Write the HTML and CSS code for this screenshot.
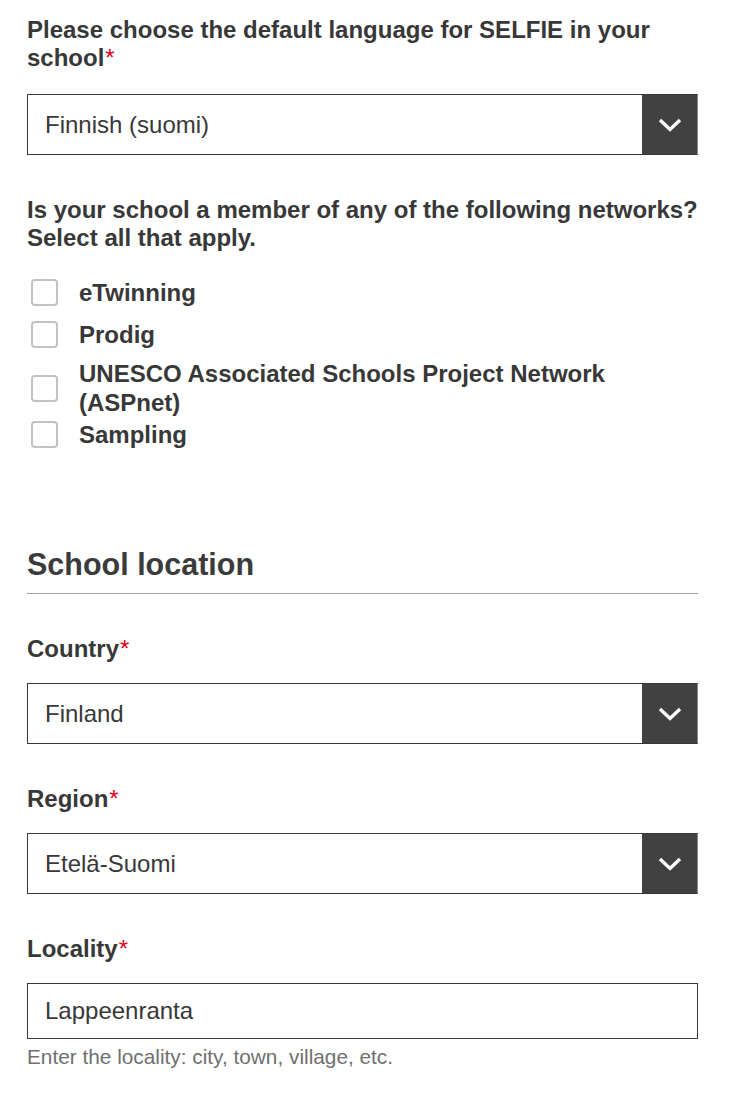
FILE: index.html
```html
<!DOCTYPE html>
<html lang="en">
<head>
<meta charset="utf-8">
<title>SELFIE school settings</title>
<link rel="stylesheet" href="styles.css">
</head>
<body>
<main class="page">
  <section class="field field--first">
    <h2 class="q-title">Please choose the default language for SELFIE in your school<span class="req">*</span></h2>
    <div class="select select--first">
      <span class="select-value">Finnish (suomi)</span>
      <span class="select-btn"><svg class="chev" viewBox="0 0 24 14" width="24" height="14"><path d="M2 2 L12 11.5 L22 2" fill="none" stroke="#fff" stroke-width="3.4"/></svg></span>
    </div>
  </section>

  <section class="field field--networks">
    <h2 class="q-title">Is your school a member of any of the following networks? Select all that apply.</h2>
    <ul class="checklist">
      <li class="check-item"><span class="checkbox"></span><span class="check-label">eTwinning</span></li>
      <li class="check-item"><span class="checkbox"></span><span class="check-label">Prodig</span></li>
      <li class="check-item check-item--wrap"><span class="checkbox"></span><span class="check-label">UNESCO Associated Schools Project Network (ASPnet)</span></li>
      <li class="check-item"><span class="checkbox"></span><span class="check-label">Sampling</span></li>
    </ul>
  </section>

  <h2 class="section-title">School location</h2>

  <section class="field">
    <label class="field-label">Country<span class="req">*</span></label>
    <div class="select">
      <span class="select-value">Finland</span>
      <span class="select-btn"><svg class="chev" viewBox="0 0 24 14" width="24" height="14"><path d="M2 2 L12 11.5 L22 2" fill="none" stroke="#fff" stroke-width="3.4"/></svg></span>
    </div>
  </section>

  <section class="field">
    <label class="field-label">Region<span class="req">*</span></label>
    <div class="select">
      <span class="select-value">Etelä-Suomi</span>
      <span class="select-btn"><svg class="chev" viewBox="0 0 24 14" width="24" height="14"><path d="M2 2 L12 11.5 L22 2" fill="none" stroke="#fff" stroke-width="3.4"/></svg></span>
    </div>
  </section>

  <section class="field">
    <label class="field-label">Locality<span class="req">*</span></label>
    <div class="text-input">Lappeenranta</div>
    <p class="help">Enter the locality: city, town, village, etc.</p>
  </section>
</main>
</body>
</html>
```

FILE: styles.css
```css
html, body {
  margin: 0;
  padding: 0;
  background: #fff;
}

body {
  font-family: "Liberation Sans", Arial, sans-serif;
  color: #383838;
}

.page {
  width: 671px;
  padding: 16px 0 0 27px;
}

.field {
  margin: 41px 0 0;
}

.field--first {
  margin-top: 0;
}

.q-title {
  margin: 0;
  font-size: 24px;
  line-height: 28px;
  font-weight: bold;
}

.req {
  color: #e2001a;
  font-weight: normal;
  margin-left: 1px;
}

.field-label {
  display: block;
  font-size: 24px;
  line-height: 28px;
  font-weight: bold;
}

.select {
  margin-top: 20px;
  height: 61px;
  box-sizing: border-box;
  border: 1px solid #383838;
  border-right-color: #8a8a8a;
  display: flex;
  align-items: stretch;
}

.select--first {
  margin-top: 22px;
}

.select-value {
  flex: 1;
  display: flex;
  align-items: center;
  padding-left: 17px;
  font-size: 24px;
  color: #383838;
}

.select-btn {
  width: 55px;
  background: #414141;
  display: flex;
  align-items: center;
  justify-content: center;
}

.chev {
  display: block;
}

.checklist {
  list-style: none;
  margin: 19px 0 0;
  padding: 0;
}

.check-item {
  display: flex;
  align-items: center;
  min-height: 42px;
}

.check-item--wrap .check-label {
  padding-top: 4px;
  margin-bottom: -4px;
}

.check-item--wrap .checkbox {
  margin-top: 4px;
  margin-bottom: -4px;
}

.checkbox {
  flex: none;
  width: 27px;
  height: 27px;
  box-sizing: border-box;
  border: 2px solid #c2c2c2;
  border-radius: 4px;
  margin-left: 4px;
  margin-right: 21px;
}

.check-label {
  font-size: 24px;
  line-height: 29px;
  font-weight: bold;
}

.section-title {
  margin: 89px 0 0;
  padding-bottom: 9px;
  border-bottom: 1px solid #9e9e9e;
  font-size: 30.5px;
  line-height: 40px;
  font-weight: bold;
  color: #3b3b3b;
}

.text-input {
  margin-top: 20px;
  height: 56px;
  box-sizing: border-box;
  border: 1px solid #383838;
  padding-left: 17px;
  display: flex;
  align-items: center;
  font-size: 24px;
}

.help {
  margin: 6px 0 0;
  font-size: 20.8px;
  line-height: 24px;
  color: #707070;
}
```
